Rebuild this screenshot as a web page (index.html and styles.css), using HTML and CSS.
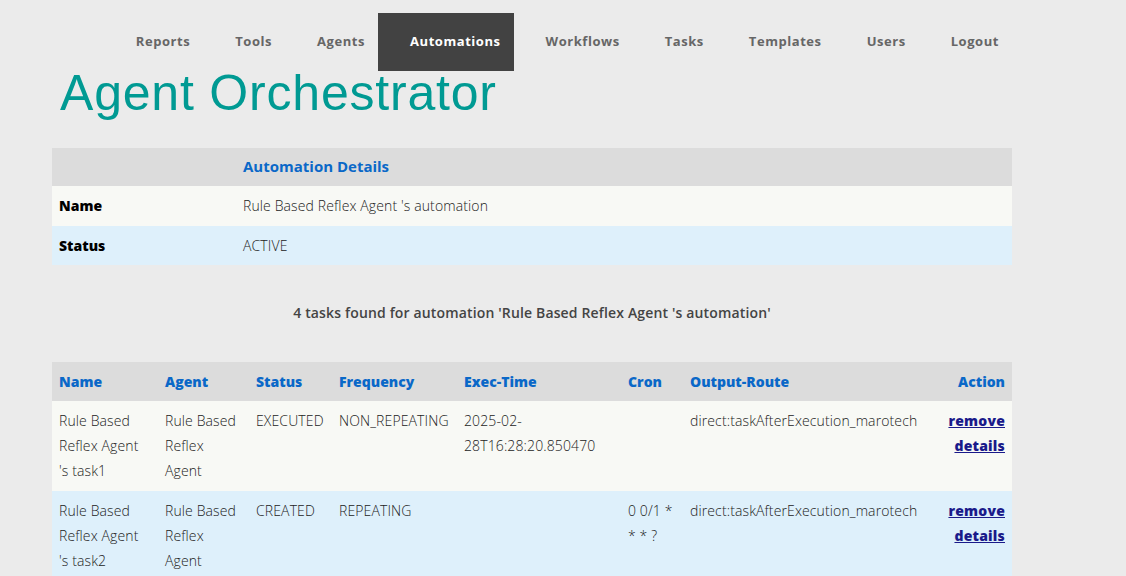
FILE: index.html
```html
<!DOCTYPE html>
<html lang="en">
<head>
<meta charset="utf-8">
<title>Agent Orchestrator</title>
<link rel="stylesheet" href="styles.css">
</head>
<body>
<div class="page">
  <nav class="nav">
    <a class="nav-item" href="#">Reports</a>
    <a class="nav-item" href="#">Tools</a>
    <a class="nav-item" href="#">Agents</a>
    <a class="nav-item active" href="#">Automations</a>
    <a class="nav-item" href="#">Workflows</a>
    <a class="nav-item" href="#">Tasks</a>
    <a class="nav-item" href="#">Templates</a>
    <a class="nav-item" href="#">Users</a>
    <a class="nav-item" href="#">Logout</a>
  </nav>
  <h1 class="title">Agent Orchestrator</h1>

  <table class="grid details">
    <colgroup><col class="c-label"><col class="c-value"></colgroup>
    <thead>
      <tr><th></th><th>Automation Details</th></tr>
    </thead>
    <tbody>
      <tr class="odd"><td class="label">Name</td><td>Rule Based Reflex Agent 's automation</td></tr>
      <tr class="even"><td class="label">Status</td><td>ACTIVE</td></tr>
    </tbody>
  </table>

  <p class="summary">4 tasks found for automation 'Rule Based Reflex Agent 's automation'</p>

  <table class="grid tasks">
    <colgroup>
      <col class="c-name"><col class="c-agent"><col class="c-status"><col class="c-freq">
      <col class="c-exec"><col class="c-cron"><col class="c-route"><col class="c-action">
    </colgroup>
    <thead>
      <tr>
        <th>Name</th><th>Agent</th><th>Status</th><th>Frequency</th>
        <th>Exec-Time</th><th>Cron</th><th>Output-Route</th><th class="right">Action</th>
      </tr>
    </thead>
    <tbody>
      <tr class="odd">
        <td>Rule Based Reflex Agent 's task1</td>
        <td>Rule Based Reflex Agent</td>
        <td>EXECUTED</td>
        <td>NON_REPEATING</td>
        <td>2025-02-28T16:28:20.850470</td>
        <td></td>
        <td>direct:taskAfterExecution_marotech</td>
        <td class="right"><a class="act" href="#">remove</a><a class="act" href="#">details</a></td>
      </tr>
      <tr class="even">
        <td>Rule Based Reflex Agent 's task2</td>
        <td>Rule Based Reflex Agent</td>
        <td>CREATED</td>
        <td>REPEATING</td>
        <td></td>
        <td>0 0/1 * * * ?</td>
        <td>direct:taskAfterExecution_marotech</td>
        <td class="right"><a class="act" href="#">remove</a><a class="act" href="#">details</a></td>
      </tr>
    </tbody>
  </table>
</div>
</body>
</html>
```

FILE: styles.css
```css
html, body {
  margin: 0;
  padding: 0;
}
body {
  background: #ebebeb;
  font-family: "Open Sans", "DejaVu Sans", sans-serif;
  color: #333;
  overflow: hidden;
}
.page {
  width: 960px;
  margin-left: 52px;
}
.nav {
  display: flex;
  justify-content: flex-end;
  margin-top: 13px;
  height: 58px;
}
.nav-item {
  display: flex;
  align-items: center;
  padding: 0 13px 2px 32px;
  font-size: 13px;
  font-weight: 700;
  letter-spacing: 0.55px;
  color: #666;
  text-decoration: none;
}
.nav-item.active {
  background: #424242;
  color: #fff;
}
.title {
  margin: -3px 0 30px;
  padding-left: 8px;
  font-family: "Liberation Sans", Arial, sans-serif;
  font-weight: 400;
  font-size: 50px;
  line-height: 50px;
  letter-spacing: 0.8px;
  color: #009a93;
}
.grid {
  width: 960px;
  border-collapse: collapse;
  table-layout: fixed;
}
.grid th,
.grid td {
  padding: 7px 7px;
  font-size: 14px;
  line-height: 25px;
  text-align: left;
  vertical-align: top;
}
.grid th {
  background: #dcdcdc;
  color: #0a68c8;
  font-weight: 800;
}
.grid td {
  font-weight: 300;
  letter-spacing: 0.12px;
  color: #222;
}
.grid .odd td {
  background: #f8f9f5;
}
.grid .even td {
  background: #def0fb;
}
.details th {
  font-size: 15px;
  font-weight: 700;
  padding: 6px 7px 7px;
}
.details .odd td {
  padding: 7px 7px 8px;
}
.details .even td {
  padding: 7px 7px 7px;
}
.details td.label {
  font-weight: 800;
  letter-spacing: 0;
  color: #000;
}
.c-label { width: 184px; }
.c-value { width: 776px; }

.summary {
  margin: 0;
  padding: 35px 0 37px;
  text-align: center;
  font-size: 14px;
  line-height: 25px;
  font-weight: 600;
  letter-spacing: 0.15px;
  color: #444;
}

.tasks tbody td {
  padding: 7px 7px 8px;
}
.c-name { width: 106px; }
.c-agent { width: 91px; }
.c-status { width: 83px; }
.c-freq { width: 125px; }
.c-exec { width: 164px; }
.c-cron { width: 62px; }
.c-route { width: 241px; }
.c-action { width: 88px; }
.grid .right {
  text-align: right;
}
.act {
  display: block;
  font-weight: 800;
  letter-spacing: 0.2px;
  color: #1a1a8a;
  text-decoration: underline;
}
```
